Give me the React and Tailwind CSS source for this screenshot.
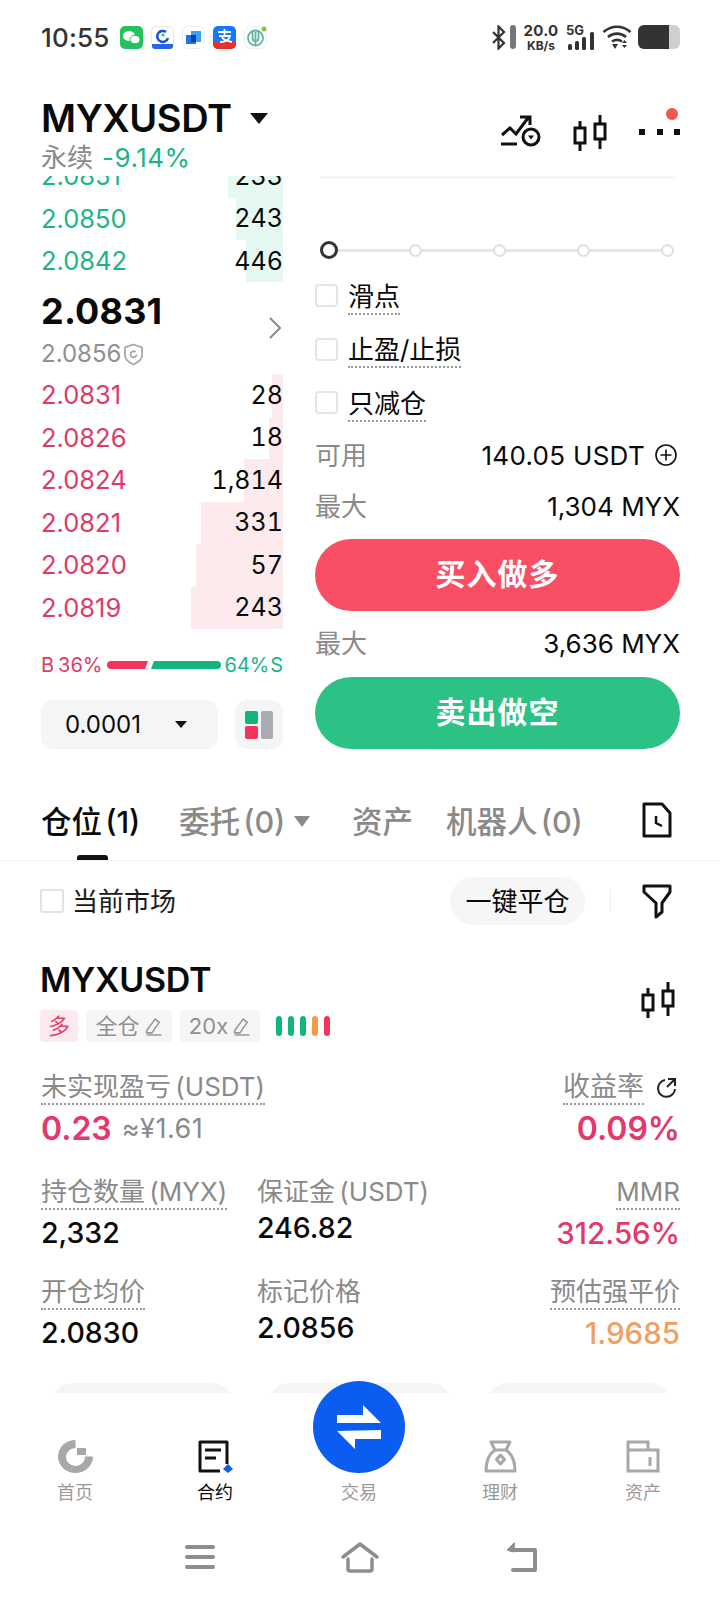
import React from 'react'

const FONT = "font-['Inter','Noto_Sans_CJK_SC',sans-serif]"

const bids = [
  { price: '2.0851', size: '233', depth: 55 },
  { price: '2.0850', size: '243', depth: 47 },
  { price: '2.0842', size: '446', depth: 37 },
]

const asks = [
  { price: '2.0831', size: '28', depth: 11 },
  { price: '2.0826', size: '18', depth: 14 },
  { price: '2.0824', size: '1,814', depth: 39 },
  { price: '2.0821', size: '331', depth: 81 },
  { price: '2.0820', size: '57', depth: 86 },
  { price: '2.0819', size: '243', depth: 91 },
]

function CandleIcon({ className }) {
  return (
    <svg className={className} viewBox="0 0 34 36" fill="none" stroke="#111" strokeWidth="3">
      <rect x="2" y="13" width="10" height="15" />
      <path d="M7 6v7M7 28v8" />
      <rect x="22" y="9" width="10" height="15" />
      <path d="M27 0v9M27 24v10" />
    </svg>
  )
}

function StatusBar() {
  return (
    <div className="h-[74px] flex items-center pl-[41px] pr-[40px] text-[#333]">
      <span className="text-[26px] font-medium w-[79px] tracking-[0.2px]">10:55</span>
      <div className="flex items-center gap-[8px]">
        <svg className="w-[23px] h-[23px]" viewBox="0 0 23 23">
          <rect width="23" height="23" rx="5" fill="#22c35e" />
          <ellipse cx="9" cy="10" rx="6" ry="5" fill="#fff" />
          <ellipse cx="15" cy="13.5" rx="5" ry="4.2" fill="#fff" stroke="#22c35e" />
        </svg>
        <svg className="w-[23px] h-[23px]" viewBox="0 0 23 23">
          <rect x="0.5" y="0.5" width="22" height="22" rx="5" fill="#fff" stroke="#e5e7eb" />
          <path d="M15 6a5.5 5.5 0 1 0 2 6" fill="none" stroke="#1d4ed8" strokeWidth="2.5" />
          <circle cx="12" cy="9" r="1.5" fill="#22c35e" />
          <path d="M1 18h21v2a3 3 0 0 1-3 3H4a3 3 0 0 1-3-3z" fill="#2563eb" />
        </svg>
        <svg className="w-[23px] h-[23px]" viewBox="0 0 23 23">
          <rect x="0.5" y="0.5" width="22" height="22" rx="5" fill="#fff" stroke="#eceff2" />
          <rect x="9" y="5" width="10" height="11" fill="#38a3f5" />
          <rect x="4" y="9" width="10" height="9" fill="#1677e8" />
          <rect x="9" y="9" width="5" height="7" fill="#0c3f9e" />
        </svg>
        <svg className="w-[23px] h-[23px]" viewBox="0 0 23 23">
          <rect width="23" height="23" rx="5" fill="#1677ff" />
          <path d="M18 23H5a5 5 0 0 1-5-5v-2h23v2a5 5 0 0 1-5 5z" fill="#e8302a" />
          <path d="M5 6h13M11.500 3v6M6 10h11c-1 4-5 6-10 6M9 11c1 3 5 4 10 5" fill="none" stroke="#fff" strokeWidth="1.800" />
        </svg>
        <svg className="w-[23px] h-[23px]" viewBox="0 0 23 23">
          <rect x="0.5" y="0.5" width="22" height="22" rx="6" fill="#fff" stroke="#eceff2" />
          <circle cx="11.500" cy="12" r="7.500" fill="none" stroke="#5fb3a1" strokeWidth="1.800" />
          <path d="M8.500 6v6a3 3 0 0 0 6 0V6M11.500 6v13" fill="none" stroke="#5fb3a1" strokeWidth="1.800" />
          <circle cx="20" cy="3" r="2.500" fill="#8bc34a" />
        </svg>
      </div>
      <div className="ml-auto flex items-center">
        <svg className="w-[14px] h-[25px]" viewBox="0 0 14 25" fill="none" stroke="#333" strokeWidth="2.200">
          <path d="M1 7l11 11-5.500 5.500V1.500L12 7 1 18" />
        </svg>
        <div className="w-[6px] h-[24px] rounded-[3px] bg-[#777] ml-[4px]" />
        <div className="ml-[9px] w-[32px] flex flex-col items-center font-bold leading-none">
          <span className="text-[15px] tracking-[0.3px]">20.0</span>
          <span className="text-[12px] mt-[2px]">KB/s</span>
        </div>
        <div className="w-[30px] h-[26px] ml-[9px] relative">
          <span className="absolute left-0 -top-[1px] text-[13px] leading-[14px] font-bold">5G</span>
          <svg className="w-[30px] h-[26px]" viewBox="0 0 30 26">
            <rect x="2" y="20" width="4" height="6" rx="1.500" fill="#333" />
            <rect x="9" y="17" width="4" height="9" rx="1.500" fill="#333" />
            <rect x="16" y="13" width="4" height="13" rx="1.500" fill="#333" />
            <rect x="24" y="8" width="4" height="18" rx="1.500" fill="#333" />
          </svg>
        </div>
        <svg className="w-[30px] h-[24px] ml-[6px]" viewBox="0 0 30 24" fill="none" stroke="#333" strokeWidth="2.600">
          <path d="M1.500 7c8-7 19-7 27 0M6 12c5.500-4.500 12.500-4.500 18 0M10 16.500c3-2 7-2 10 0" />
          <path d="M10 19h6l-3 5z" fill="#333" stroke="none" />
          <path d="M20 18l2.500-3 2.500 3zM20 20l2.500 3 2.500-3z" fill="#333" stroke="none" />
        </svg>
        <div className="w-[42px] h-[24px] ml-[6px] rounded-[6px] overflow-hidden flex bg-[#cfcfcf]">
          <div className="w-[31px] bg-[#333]" />
        </div>
      </div>
    </div>
  )
}

function Header() {
  return (
    <div className="h-[102px] pl-[41px] pr-[40px] flex justify-between relative">
      <div className="pt-[22px]">
        <div className="flex items-center">
          <span className="text-[38px] leading-[44px] font-semibold text-[#0a0a0a] tracking-[-0.4px]">MYXUSDT</span>
          <span className="ml-[18px] w-0 h-0 border-x-[9px] border-x-transparent border-t-[11px] border-t-[#111]" />
        </div>
        <div className="flex items-center text-[26px] leading-[36px]">
          <span className="text-[#8a8a8a]">永续</span>
          <span className="ml-[9px] text-[#1cb587] tracking-[0.5px]">-9.14%</span>
        </div>
      </div>
      <div className="flex items-start pt-[41px]">
        <svg className="w-[40px] h-[33px]" viewBox="0 0 40 33" fill="none" stroke="#111" strokeWidth="3">
          <path d="M0 29h16M1 20l8-7 6 6L27 3M19 2h10v8" />
          <circle cx="30" cy="22" r="8" fill="#fff" />
          <path d="M27 20.500h6l-3 4z" fill="#111" stroke="none" />
        </svg>
        <CandleIcon className="w-[34px] h-[36px] ml-[32px]" />
        <div className="ml-[32px] w-[41px] flex justify-between mt-[14px]">
          <span className="w-[6px] h-[6px] bg-[#111]" />
          <span className="w-[6px] h-[6px] bg-[#111]" />
          <span className="w-[6px] h-[6px] bg-[#111]" />
        </div>
      </div>
      <span className="absolute right-[42px] top-[34px] w-[12px] h-[12px] rounded-full bg-[#f0574f]" />
    </div>
  )
}

function BookRow({ row, color, depthColor }) {
  return (
    <div className="h-[42.5px] relative flex items-center justify-between">
      <div className={`absolute right-0 inset-y-0 ${depthColor}`} style={{ width: `${row.depth * 0.42 * 2.4}px` }} />
      <span className={`relative text-[25.500px] ${color}`}>{row.price}</span>
      <span className="relative text-[25px] tabular-nums text-[#0a0a0a]">{row.size}</span>
    </div>
  )
}

function OrderBook() {
  return (
    <div className="w-[242px]">
      <div className="h-[106px] overflow-hidden">
        <div className="-mt-[21px]">
          {bids.map((row) => (
            <BookRow key={row.price} row={row} color="text-[#1cb587]" depthColor="bg-[#e6f8f2]" />
          ))}
        </div>
      </div>
      <div className="h-[92px] flex justify-between">
        <div>
          <div className="text-[36px] leading-[58px] font-bold text-[#0a0a0a] tracking-[0.2px]">2.0831</div>
          <div className="flex items-center text-[#909090] text-[24px] leading-[32px] -mt-[2px]">
            <span>2.0856</span>
            <svg className="w-[21px] h-[23px] ml-[2px]" viewBox="0 0 21 23" fill="none" stroke="#a8a8a8" strokeWidth="1.800">
              <path d="M10.500 1.500l8.500 3v8c0 4-4 7-8.500 9-4.500-2-8.500-5-8.500-9v-8z" />
              <path d="M13.500 11.500a3 3 0 1 1-1-2.500" />
            </svg>
          </div>
        </div>
        <svg className="w-[14px] h-[24px] mt-[34px] mr-[1px]" viewBox="0 0 14 24" fill="none" stroke="#8a8a8a" strokeWidth="2">
          <path d="M2 2l10 10L2 22" />
        </svg>
      </div>
      {asks.map((row) => (
        <BookRow key={row.price} row={row} color="text-[#df3a67]" depthColor="bg-[#fdeaed]" />
      ))}
      <div className="h-[30px] mt-[21px] flex items-center text-[20px] leading-none">
        <span className="text-[#df3a67]">B</span>
        <span className="text-[#df3a67] ml-[4px]">36%</span>
        <svg className="w-[114px] h-[8px] ml-[4px] shrink-0" viewBox="0 0 114 8">
          <path d="M4 0h37l-3 8H4a4 4 0 0 1 0-8z" fill="#f5335c" />
          <path d="M47 0h63a4 4 0 0 1 0 8H44z" fill="#12b57e" />
        </svg>
        <span className="text-[#1cb587] ml-[4px]">64%</span>
        <span className="text-[#1cb587] ml-auto">S</span>
      </div>
      <div className="mt-[20px] flex justify-between">
        <div className="w-[177px] h-[49px] rounded-[12px] bg-[#f4f5f6] flex items-center pl-[24px] pr-[31px] justify-between">
          <span className="text-[24px] text-[#0a0a0a]">0.0001</span>
          <span className="w-0 h-0 border-x-[6.500px] border-x-transparent border-t-[7px] border-t-[#111]" />
        </div>
        <div className="w-[48px] h-[49px] rounded-[12px] bg-[#f4f5f6] flex items-center justify-center">
          <svg className="w-[28px] h-[28px]" viewBox="0 0 28 28">
            <rect x="0" y="0" width="13" height="13" rx="2" fill="#12b57e" />
            <rect x="0" y="15" width="13" height="13" rx="2" fill="#f5335c" />
            <rect x="16" y="0" width="12" height="28" rx="2" fill="#a8abb0" />
          </svg>
        </div>
      </div>
    </div>
  )
}

function CheckRow({ label }) {
  return (
    <div className="h-[53.500px] flex items-center">
      <span className="w-[23px] h-[23px] rounded-[4px] border-2 border-[#e5e5e5] -mt-[2px]" />
      <span className="ml-[10px] text-[26px] leading-[32px] mt-[2px] text-[#0a0a0a] border-b-2 border-dotted border-[#9a9a9a]">{label}</span>
    </div>
  )
}

function InfoRow({ label, children, className }) {
  return (
    <div className={`flex items-center justify-between text-[26px] ${className}`}>
      <span className="text-[#8a8a8a]">{label}</span>
      {children}
    </div>
  )
}

function OrderForm() {
  return (
    <div className="w-[365px]">
      <div className="h-[3px] mx-[5px] bg-[#f5f5f5]" />
      <div className="mt-[62px] h-[18px] ml-[5px] mr-[6px] relative flex items-center justify-between">
        <div className="absolute inset-x-0 h-[3px] bg-[#e6e6e6]" />
        <span className="relative w-[18px] h-[18px] rounded-full bg-white border-[3px] border-[#333]" />
        <span className="relative w-[13px] h-[13px] rounded-full bg-white border-2 border-[#e0e0e0]" />
        <span className="relative w-[13px] h-[13px] rounded-full bg-white border-2 border-[#e0e0e0]" />
        <span className="relative w-[13px] h-[13px] rounded-full bg-white border-2 border-[#e0e0e0]" />
        <span className="relative w-[13px] h-[13px] rounded-full bg-white border-2 border-[#e0e0e0]" />
      </div>
      <div className="mt-[11px]">
        <CheckRow label="滑点" />
        <CheckRow label="止盈/止损" />
        <CheckRow label="只减仓" />
      </div>
      <InfoRow label="可用" className="h-[49px]">
        <span className="flex items-center text-[#0a0a0a] tracking-[0.3px] mr-[3px]">
          140.05 USDT
          <svg className="w-[22px] h-[22px] ml-[10px]" viewBox="0 0 22 22" fill="none" stroke="#111" strokeWidth="1.600">
            <circle cx="11" cy="11" r="10" />
            <path d="M11 5.500v11M5.500 11h11" />
          </svg>
        </span>
      </InfoRow>
      <InfoRow label="最大" className="h-[50px] mt-[2px]">
        <span className="text-[#0a0a0a]">1,304 MYX</span>
      </InfoRow>
      <button className="w-full h-[72px] mt-[7px] rounded-full bg-[#f94f64] text-white text-[30px] font-bold tracking-[1px]">买入做多</button>
      <InfoRow label="最大" className="h-[66px]">
        <span className="text-[#0a0a0a]">3,636 MYX</span>
      </InfoRow>
      <button className="w-full h-[72px] rounded-full bg-[#2cc286] text-white text-[30px] font-bold tracking-[1px]">卖出做空</button>
    </div>
  )
}

function Tabs() {
  return (
    <div className="mt-[41px] h-[71px] border-b border-[#efefef] pl-[41px] pr-[48px] flex items-start relative text-[30.500px] text-[#8a8a8a] font-medium [word-spacing:-5px]">
      <span className="mt-[9px] text-[#0a0a0a] w-[138px]">仓位 (1)</span>
      <span className="absolute left-[77px] bottom-0 w-[31px] h-[5px] rounded-t-[3px] bg-[#111]" />
      <span className="mt-[9px] w-[115px]">委托 (0)</span>
      <span className="mt-[26px] w-0 h-0 border-x-[8px] border-x-transparent border-t-[11px] border-t-[#8a8a8a]" />
      <span className="mt-[9px] ml-[42px] w-[94px]">资产</span>
      <span className="mt-[9px]">机器人 (0)</span>
      <svg className="ml-auto mt-[12px] w-[30px] h-[36px]" viewBox="0 0 30 36" fill="none" stroke="#111" strokeWidth="3">
        <path d="M2 2h18l8 9v23H2z" strokeLinejoin="round" />
        <path d="M14 14v7l6 3" strokeWidth="2.500" />
      </svg>
    </div>
  )
}

function FilterRow() {
  return (
    <div className="h-[80px] pl-[40px] pr-[48px] flex items-center">
      <span className="w-[24px] h-[24px] rounded-[3px] border-2 border-[#e2e2e2]" />
      <span className="ml-[8px] text-[26px] text-[#1a1a1a]">当前市场</span>
      <button className="ml-auto w-[135px] h-[48px] rounded-full bg-[#f6f6f6] text-[26px] text-[#0a0a0a]">一键平仓</button>
      <span className="ml-[25px] w-px h-[22px] bg-[#eeeeee]" />
      <svg className="ml-[31px] w-[30px] h-[35px]" viewBox="0 0 30 35" fill="none" stroke="#111" strokeWidth="3" strokeLinejoin="round">
        <path d="M2 2h26v6l-8 11v9l-6 5V19L2 8z" />
      </svg>
    </div>
  )
}

function Pencil() {
  return (
    <svg className="w-[19px] h-[19px]" viewBox="0 0 17 18" fill="none" stroke="#999" strokeWidth="1.500">
      <path d="M2 13L10 2l4 3-7 10H2zM2 17h14" />
    </svg>
  )
}

function PositionTitle() {
  return (
    <div className="pl-[40px] pr-[45px] flex justify-between">
      <div className="pt-[14px]">
        <div className="text-[34px] leading-[50px] font-semibold text-[#0a0a0a] tracking-[-0.3px]">MYXUSDT</div>
        <div className="mt-[5px] flex items-center h-[32px] text-[22px] text-[#909090]">
          <span className="w-[38px] h-full rounded-[4px] bg-[#fdeaee] text-[#e5416e] flex items-center justify-center">多</span>
          <span className="ml-[8px] w-[86px] h-full rounded-[4px] bg-[#f6f6f6] flex items-center justify-center gap-[4px]">全仓<Pencil /></span>
          <span className="ml-[8px] w-[80px] h-full rounded-[4px] bg-[#f6f6f6] flex items-center justify-center gap-[4px]">20x<Pencil /></span>
          <div className="ml-[16px] flex gap-[6px]">
            <span className="w-[6px] h-[20px] rounded-full bg-[#12b57e]" />
            <span className="w-[6px] h-[20px] rounded-full bg-[#12b57e]" />
            <span className="w-[6px] h-[20px] rounded-full bg-[#12b57e]" />
            <span className="w-[6px] h-[20px] rounded-full bg-[#f59b45]" />
            <span className="w-[6px] h-[20px] rounded-full bg-[#f5335c]" />
          </div>
        </div>
      </div>
      <CandleIcon className="w-[34px] h-[36px] mt-[41px]" />
    </div>
  )
}

const labelClass = 'text-[26px] leading-[32px] text-[#8a8a8a] [word-spacing:-3px]'
const dotted = 'border-b-2 border-dotted border-[#9a9a9a]'

function Metric({ label, value, underlined, valueClass, right }) {
  return (
    <div className={`flex flex-col ${right ? 'items-end' : 'items-start'}`}>
      <span className={`${labelClass} ${underlined ? dotted : ''}`}>{label}</span>
      <span className={`leading-[40px] font-medium ${underlined ? 'mt-[3px]' : ''} ${valueClass || 'text-[28.500px] text-[#0a0a0a]'}`}>{value}</span>
    </div>
  )
}

function Metrics() {
  return (
    <div className="pl-[41px] pr-[40px]">
      <div className="mt-[29px] flex justify-between">
        <div className="flex flex-col items-start">
          <span className={`${labelClass} ${dotted}`}>未实现盈亏 (USDT)</span>
          <div className="mt-[4px] h-[40px] flex items-center">
            <span className="text-[32px] font-semibold text-[#e5386a]">0.23</span>
            <span className="ml-[10px] text-[27px] tracking-[0.5px] text-[#8a8a8a]">≈¥1.61</span>
          </div>
        </div>
        <div className="flex flex-col items-end">
          <div className="flex items-center mr-[3px]">
            <span className={`text-[27px] leading-[32px] text-[#8a8a8a] ${dotted}`}>收益率</span>
            <svg className="ml-[11px] w-[22px] h-[22px]" viewBox="0 0 22 22" fill="none" stroke="#222" strokeWidth="2">
              <path d="M10 3a8.500 8.500 0 1 0 10 9M13 2h7v7M20 2l-8 8" />
            </svg>
          </div>
          <span className="mt-[4px] text-[32px] leading-[40px] font-semibold text-[#e5386a]">0.09%</span>
        </div>
      </div>
      <div className="mt-[27px] grid grid-cols-[216px_1fr_auto]">
        <Metric label="持仓数量 (MYX)" value="2,332" underlined />
        <Metric label="保证金 (USDT)" value="246.82" />
        <Metric label="MMR" value="312.56%" underlined right valueClass="text-[#e5386a] text-[29.500px]" />
      </div>
      <div className="mt-[23px] grid grid-cols-[216px_1fr_auto]">
        <Metric label="开仓均价" value="2.0830" underlined />
        <Metric label="标记价格" value="2.0856" />
        <Metric label="预估强平价" value="1.9685" underlined right valueClass="text-[#f0a060] text-[29.500px]" />
      </div>
    </div>
  )
}

function BottomNav() {
  return (
    <div className="h-[137px] relative flex items-start">
      <NavItem label="首页" className="ml-[35px]">
        <svg className="w-[35px] h-[33px]" viewBox="0 0 35 33" fill="#a8a8a8">
          <path d="M17.500 0A17.500 16.500 0 1 0 35 16.500H27A9.500 9 0 1 1 17.500 8z" />
          <rect x="19" y="8" width="9" height="7" />
        </svg>
      </NavItem>
      <NavItem label="合约" active className="ml-[60px]">
        <svg className="w-[40px] h-[33px]" viewBox="0 0 40 33" fill="none">
          <path d="M32 24V2H5v29h20" stroke="#111" strokeWidth="3" strokeLinejoin="round" />
          <path d="M10 10h16M10 18h11" stroke="#111" strokeWidth="3" />
          <path d="M33 24l5 5-5 4-5-4z" fill="#0b5cf0" />
        </svg>
      </NavItem>
      <NavItem label="交易" className="ml-[64px]">
        <div className="h-[33px]" />
      </NavItem>
      <NavItem label="理财" className="ml-[61px]">
        <svg className="w-[33px] h-[33px]" viewBox="0 0 33 33" fill="none" stroke="#a8a8a8" strokeWidth="3" strokeLinejoin="round">
          <path d="M7 2h19l-4 8h-11zM11 10C5 14 2 21 2 31h29c0-10-3-17-9-21z" />
          <path d="M16.500 15l4 4.500-4 4.500-4-4.500z" />
        </svg>
      </NavItem>
      <NavItem label="资产" className="ml-[63px]">
        <svg className="w-[34px] h-[33px]" viewBox="0 0 34 33" fill="none" stroke="#a8a8a8" strokeWidth="3">
          <path d="M2 31V2h20v8h10v21zM2 10h20" />
          <path d="M24 17v9" />
        </svg>
      </NavItem>
      <div className="absolute left-[313px] -top-[12px] w-[92px] h-[92px] rounded-full bg-[#0b5cf0] flex items-center justify-center">
        <svg className="w-[44px] h-[44px]" viewBox="0 0 44 44" fill="#fff">
          <path d="M0 10h26V0l18 18H0z" />
          <path d="M44 25v9H18v10L0 26z" />
        </svg>
      </div>
    </div>
  )
}

function NavItem({ label, active, className, children }) {
  return (
    <div className={`w-[80px] pt-[47px] flex flex-col items-center ${className}`}>
      {children}
      <span className={`mt-[8px] text-[18px] leading-[24px] ${active ? 'text-[#0a0a0a]' : 'text-[#9a9a9a]'}`}>{label}</span>
    </div>
  )
}

function SystemNav() {
  return (
    <div className="h-[54px] relative flex items-center pl-[185px]">
      <div className="w-[30px] flex flex-col gap-[6px]">
        <span className="h-[4px] rounded-full bg-[#8e8e8e]" />
        <span className="h-[4px] rounded-full bg-[#8e8e8e]" />
        <span className="h-[4px] rounded-full bg-[#8e8e8e]" />
      </div>
      <svg className="ml-[126px] w-[38px] h-[31px]" viewBox="0 0 38 31" fill="none" stroke="#8e8e8e" strokeWidth="3.500" strokeLinecap="round" strokeLinejoin="round">
        <path d="M2 15L19 2l17 13M7 17v10a2 2 0 0 0 2 2h20a2 2 0 0 0 2-2V17" />
      </svg>
      <svg className="ml-[126px] w-[32px] h-[30px]" viewBox="0 0 32 30" fill="none" stroke="#8e8e8e" strokeWidth="4" strokeLinecap="round" strokeLinejoin="round">
        <path d="M6 8h24v20H8" />
        <path d="M9 1L2 8l7 2z" fill="#8e8e8e" strokeWidth="1" />
      </svg>
    </div>
  )
}

export default function App() {
  return (
    <div className={`w-[720px] h-[1600px] overflow-hidden bg-white ${FONT}`}>
      <StatusBar />
      <Header />
      <div className="h-[573px] pl-[41px] pr-[40px] flex justify-between">
        <OrderBook />
        <OrderForm />
      </div>
      <Tabs />
      <FilterRow />
      <PositionTitle />
      <Metrics />
      <div className="mt-[30px] h-[10px] pl-[52px] pr-[50px] flex justify-between overflow-hidden">
        <div className="w-[180px] h-[40px] rounded-[30px] bg-[#f5f5f5]" />
        <div className="w-[182px] h-[40px] rounded-[30px] bg-[#f5f5f5]" />
        <div className="w-[182px] h-[40px] rounded-[30px] bg-[#f5f5f5]" />
      </div>
      <BottomNav />
      <SystemNav />
    </div>
  )
}
